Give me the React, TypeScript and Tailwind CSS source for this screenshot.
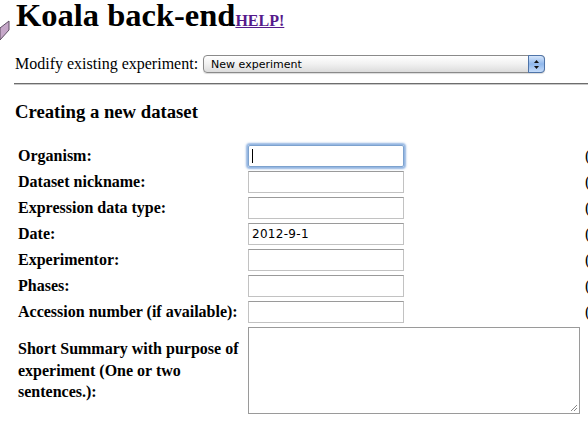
import React from "react";

const fields = [
  { label: "Organism:", value: "", focused: true },
  { label: "Dataset nickname:", value: "" },
  { label: "Expression data type:", value: "" },
  { label: "Date:", value: "2012-9-1" },
  { label: "Experimentor:", value: "" },
  { label: "Phases:", value: "" },
  { label: "Accession number (if available):", value: "" },
];

function SelectBox() {
  return (
    <div className="relative ml-[5px] flex h-[18px] w-[342px] items-center rounded-[4px] border border-[#8a8a8a] bg-gradient-to-b from-white via-[#f1f1f1] to-[#dcdcdc] shadow-[0_1px_1px_rgba(0,0,0,0.15)]">
      <span className="pl-[7px] font-['DejaVu_Sans',sans-serif] text-[11px] leading-none text-black">
        New experiment
      </span>
      <div className="absolute right-[-1px] top-[-1px] flex h-[18px] w-[17px] flex-col items-center justify-center rounded-r-[4px] border border-[#4f74a8] bg-gradient-to-b from-[#d6e6fb] via-[#8fb7ec] to-[#c5dcfa]">
        <svg width="7" height="11" viewBox="0 0 7 11">
          <path d="M3.5 1 L6 4 L1 4 Z" fill="#111" />
          <path d="M3.5 10 L6 7 L1 7 Z" fill="#111" />
        </svg>
      </div>
    </div>
  );
}

export default function App() {
  return (
    <main className="relative h-[425px] w-[588px] overflow-hidden bg-white font-['Liberation_Serif',serif] text-black">
      {/* stray logo corner */}
      <svg className="absolute left-0 top-[20px]" width="11" height="22" viewBox="0 0 11 22">
        <path d="M0 8 L9 1 L9 10 L0 20 Z" fill="#c6a8c9" stroke="#5e4f63" strokeWidth="1" />
      </svg>

      <div className="flex items-baseline pl-[16px] pt-[1px]">
        <h1 className="text-[32.5px] font-bold leading-[28px]">Koala back-end</h1>
        <a href="#" className="text-[16px] font-bold leading-none text-[#551a8b] underline">
          HELP!
        </a>
      </div>

      <div className="mt-[25px] flex items-center pl-[15px]">
        <span className="text-[16px] leading-[20px]">Modify existing experiment:</span>
        <SelectBox />
      </div>

      <div className="ml-[14px] mt-[9px] h-[2px] border-t border-[#6d6d6d] bg-[#c8c8c8]" />

      <h2 className="ml-[15px] mt-[16px] text-[18.7px] font-bold leading-[22px]">Creating a new dataset</h2>

      <div className="mt-[22px] grid grid-cols-[230px_156px_1fr] items-center gap-y-[4px] pl-[18px]">
        {fields.map((f) => (
          <React.Fragment key={f.label}>
            <span className="text-[16px] font-bold leading-[18px]">{f.label}</span>
            <div
              className={
                f.focused
                  ? "flex h-[22px] w-[156px] items-center rounded-[2px] border border-[#7da2ce] px-[3px] shadow-[0_0_2px_2px_rgba(110,155,215,0.75)]"
                  : "flex h-[22px] w-[156px] items-center border border-[#c2c2c2] border-t-[#9a9a9a] px-[3px]"
              }
            >
              {f.focused ? (
                <span className="h-[14px] w-[1px] bg-black" />
              ) : (
                <span className="font-['DejaVu_Sans',sans-serif] text-[12px] tracking-[0.3px] leading-none">{f.value}</span>
              )}
            </div>
            <span className="pl-[181px] text-[16px] leading-[18px]">(</span>
          </React.Fragment>
        ))}
        <div className="text-[16px] font-bold leading-[21.5px]">
          Short Summary with purpose of experiment (One or two sentences.):
        </div>
        <div className="relative col-span-2 h-[87px] w-[332px] border border-[#9a9a9a]">
          <svg className="absolute bottom-[1px] right-[1px]" width="9" height="9" viewBox="0 0 9 9">
            <path d="M8 2 L2 8 M8 5 L5 8" stroke="#8a8a8a" strokeWidth="1" />
          </svg>
        </div>
      </div>
    </main>
  );
}
